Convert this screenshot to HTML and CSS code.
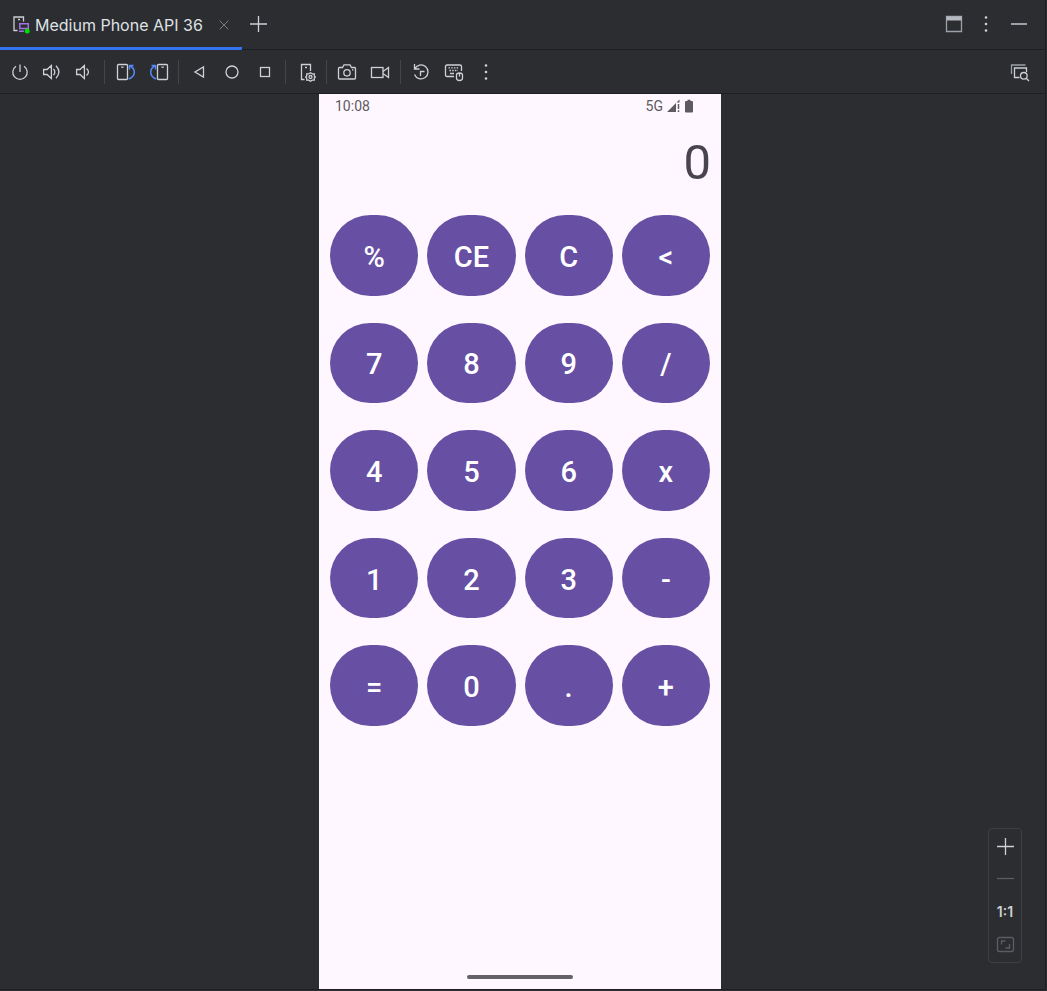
FILE: index.html
```html
<!DOCTYPE html>
<html lang="en">
<head>
<meta charset="utf-8">
<meta name="viewport" content="width=device-width, initial-scale=1">
<title>Medium Phone API 36</title>
<link rel="stylesheet" href="styles.css">
</head>
<body>
<div class="window">
  <header class="tabs">
    <div class="tab">
      <svg class="tab-icon" width="20" height="20" viewBox="0 0 20 20">
        <path d="M5.500 15.500H2V2H11.500V6.500" class="line"/><path d="M6 4.500h2" class="line"/>
        <path d="M7.800 8.800h8.500v4.700H7.800z" class="violet"/><path d="M7 16.200h5" class="violet"/>
        <circle cx="15.200" cy="16" r="2.500" fill="#00e000"/>
      </svg>
      <span class="tab-title">Medium Phone API 36</span>
      <button class="close" aria-label="Close tab"><svg width="10" height="10" viewBox="0 0 10 10"><path d="M.5.5l9 9M9.500.5l-9 9"/></svg></button>
    </div>
    <button class="icon" aria-label="New tab"><svg width="24" height="24" viewBox="0 0 24 24"><path d="M12.500 3v16M4 11h17"/></svg></button>
    <div class="window-actions">
      <button class="icon" aria-label="Window"><svg width="24" height="24" viewBox="0 0 24 24"><path d="M4.500 4.500h15v15h-15z" class="muted"/><path d="M4.500 4.500h15v4h-15z" fill="#b4b8bf" stroke="none"/></svg></button>
      <button class="icon" aria-label="Options"><svg width="24" height="24" viewBox="0 0 24 24"><g class="dots"><circle cx="12" cy="5.500" r="1.300"/><circle cx="12" cy="12" r="1.300"/><circle cx="12" cy="18.500" r="1.300"/></g></svg></button>
      <button class="icon" aria-label="Hide"><svg width="24" height="24" viewBox="0 0 24 24"><path d="M5 12h16" class="muted" stroke-width="2"/></svg></button>
    </div>
  </header>

  <div class="toolbar" role="toolbar" aria-label="Emulator controls">
    <div class="group">
      <button class="icon" aria-label="Power"><svg width="24" height="24" viewBox="0 0 24 24"><path d="M12 4.500v7.500M8 6.200A7.200 7.200 0 1 0 16 6.200"/></svg></button>
      <button class="icon" aria-label="Volume up"><svg width="24" height="24" viewBox="0 0 24 24"><path d="M3.600 9.500H7l4.400-4v13L7 14.500H3.600zM13.500 8.800q2.600 3.200 0 6.400M16 5.800q5.800 6.200 0 12.400"/></svg></button>
      <button class="icon" aria-label="Volume down"><svg width="24" height="24" viewBox="0 0 24 24"><path d="M4.600 9.500H8l4.400-4v13L8 14.500H4.600zM14.500 8.500q4 3.500 0 7"/></svg></button>
    </div>
    <span class="separator"></span>
    <div class="group wide">
      <button class="icon" aria-label="Rotate left"><svg width="24" height="24" viewBox="0 0 24 24"><rect x="4.500" y="4.500" width="10" height="15" rx="1"/><path d="M8.200 7.200h2.300"/><path class="blue" d="M20.500 5.500H16.500V9.500M16.500 5.500q5 2.500 4.800 7t-5.600 6.500"/></svg></button>
      <button class="icon" aria-label="Rotate right"><svg width="24" height="24" viewBox="0 0 24 24"><rect x="11.500" y="4.500" width="10" height="15" rx="1"/><path d="M15.500 7.200h2.300"/><path class="blue" d="M5.500 5.500H9.500V9.500M9.500 5.500q-5 2.500-4.800 7t5.600 6.500"/></svg></button>
    </div>
    <span class="separator"></span>
    <div class="group wide">
      <button class="icon" aria-label="Back"><svg width="24" height="24" viewBox="0 0 24 24"><path d="M16.500 7v10L8 12z"/></svg></button>
      <button class="icon" aria-label="Home"><svg width="24" height="24" viewBox="0 0 24 24"><circle cx="12" cy="12" r="6"/></svg></button>
      <button class="icon" aria-label="Overview"><svg width="24" height="24" viewBox="0 0 24 24"><rect x="7.500" y="7.500" width="9" height="9"/></svg></button>
    </div>
    <span class="separator"></span>
    <div class="group">
      <button class="icon" aria-label="Device settings"><svg width="24" height="24" viewBox="0 0 24 24"><path d="M10.500 19.500H7.500v-15h9V11M11 7.500h2"/><path d="M16.500 12.700l1.800 1.100 2 .1v2.100l1 1-1 1v2.100l-2 .1-1.800 1.100-1.800-1.100-2-.1V18l-1-1 1-1v-2.100l2-.1z"/><circle cx="16.500" cy="17" r="1.500"/></svg></button>
    </div>
    <span class="separator"></span>
    <div class="group wide">
      <button class="icon" aria-label="Take screenshot"><svg width="24" height="24" viewBox="0 0 24 24"><path d="M4.500 7.500H7.500L9 4.800h6l1.500 2.700H19.500q1 0 1 1v9.500q0 1-1 1H4.500q-1 0-1-1V8.500q0-1 1-1z"/><circle cx="12" cy="12.800" r="3.200"/><path d="M17 9.800h1.500"/></svg></button>
      <button class="icon" aria-label="Record screen"><svg width="24" height="24" viewBox="0 0 24 24"><rect x="3.500" y="7.500" width="11.500" height="10"/><path d="M15 11.500l5.500-4v10l-5.500-4"/></svg></button>
    </div>
    <span class="separator"></span>
    <div class="group">
      <button class="icon" aria-label="Snapshots"><svg width="24" height="24" viewBox="0 0 24 24"><path d="M5.500 4v5h5M5.700 8.800A7 7 0 1 1 5.500 14.500M11.500 16v-4.500H15.500"/></svg></button>
      <button class="icon" aria-label="Hardware input"><svg width="24" height="24" viewBox="0 0 24 24"><path d="M13 16.500H6q-1.500 0-1.500-1.500V6.500Q4.500 5 6 5h13q1.500 0 1.500 1.500V11M9 13.500h4"/><path d="M7.500 7.800h10.500M8.500 10.500h8.500" stroke-dasharray="1.500 1.200"/><path d="M15.500 15q0-2 3-2t3 2v3q0 2.500-3 2.500t-3-2.500zM18.500 13v3.500"/></svg></button>
      <button class="icon" aria-label="More"><svg width="24" height="24" viewBox="0 0 24 24"><g class="dots"><circle cx="13" cy="5.500" r="1.300"/><circle cx="13" cy="12" r="1.300"/><circle cx="13" cy="18.500" r="1.300"/></g></svg></button>
    </div>
    <button class="icon inspect" aria-label="Inspect layout"><svg width="24" height="24" viewBox="0 0 24 24"><path d="M3.500 14V5h14" class="muted"/><path d="M11.500 17.500H6.500V8h12v4"/><circle cx="15.800" cy="15.800" r="3.300"/><path d="M18.200 18.200L21 21"/></svg></button>
  </div>

  <main class="stage">
    <section class="phone" aria-label="Calculator">
      <div class="status">
        <span>10:08</span>
        <span class="signals">
          <span>5G</span>
          <svg width="14" height="14" viewBox="0 0 14 14"><path d="M0 13L9 4v9zM9.500 3.500L12.500.5v3z" fill="#5e5b60"/><path d="M11.500 5v5M11.500 11.200v1.800" stroke="#5e5b60" stroke-width="1.500"/></svg>
          <svg width="8" height="14" viewBox="0 0 8 14"><path d="M2.500.8h3V2H7q1 0 1 1v9.500q0 1-1 1H1q-1 0-1-1V3q0-1 1-1h1.500z" fill="#5e5b60"/></svg>
        </span>
      </div>
      <output class="display">0</output>
      <div class="keypad">
        <button>%</button><button>CE</button><button>C</button><button>&lt;</button>
        <button>7</button><button>8</button><button>9</button><button>/</button>
        <button>4</button><button>5</button><button>6</button><button>x</button>
        <button>1</button><button>2</button><button>3</button><button>-</button>
        <button>=</button><button>0</button><button>.</button><button>+</button>
      </div>
      <div class="gesture"></div>
    </section>
    <div class="zoom">
      <button class="icon" aria-label="Zoom in"><svg width="24" height="24" viewBox="0 0 24 24"><path d="M12.500 4v17M4 12.500h17"/></svg></button>
      <button class="icon dim" aria-label="Zoom out"><svg width="24" height="24" viewBox="0 0 24 24"><path d="M4 11.500h17"/></svg></button>
      <button class="actual">1:1</button>
      <button class="icon dim" aria-label="Fit to window"><svg width="24" height="24" viewBox="0 0 24 24"><rect x="4.500" y="4.500" width="16" height="14" rx="2"/><path d="M8.500 11.500v-3.500h4M16.500 11v4h-4"/></svg></button>
    </div>
  </main>
</div>
</body>
</html>
```
FILE: styles.css
```css
* { box-sizing: border-box; }

body {
  margin: 0;
  padding: 0 1px 1px 0;
  height: 100vh;
  background: #2b2d30;
  color: #dfe1e5;
  font-family: Inter, "Liberation Sans", sans-serif;
}

button {
  margin: 0;
  padding: 0;
  border: 0;
  background: none;
  color: inherit;
  font: inherit;
}

svg { display: block; fill: none; flex: none; }

.window {
  display: flex;
  flex-direction: column;
  height: 100%;
  border-right: 1px solid #1e1f22;
  border-bottom: 1px solid #1e1f22;
}

.icon { width: 24px; height: 24px; stroke: #ced0d6; stroke-width: 1.3; }
.icon .muted { stroke: #9da0a8; }
.icon .blue { stroke: #548af7; stroke-width: 1.5; }
.icon .dots { fill: #ced0d6; stroke: none; }
.icon.dim { stroke: #5a5d63; }

.tabs {
  display: flex;
  align-items: center;
  flex: none;
  height: 50px;
  border-bottom: 1px solid #1e1f22;
}

.tab {
  display: flex;
  align-items: center;
  height: 50px;
  margin: 0 4px -1px 0;
  padding: 3px 13px 0 12px;
  border-bottom: 3px solid #3574f0;
  border-bottom-right-radius: 1px;
}

.tab-icon { margin-right: 3px; }
.tab-icon .line { stroke: #ced0d6; stroke-width: 1.3; }
.tab-icon .violet { stroke: #a571e6; stroke-width: 1.5; }
.tab-title { font-size: 16px; line-height: 24px; white-space: nowrap; }
.close { margin-left: 16px; stroke: #7a7d84; }

.window-actions { display: flex; gap: 8px; margin-left: auto; padding: 0 15px 2px 0; }

.toolbar {
  display: flex;
  align-items: center;
  flex: none;
  gap: 8px;
  padding: 10px 13px 9px 8px;
  border-bottom: 1px solid #1e1f22;
}

.group { display: flex; gap: 8px; }
.group.wide { gap: 9px; }
.separator { width: 1px; height: 24px; background: #43454a; }
.inspect { margin-left: auto; }

.stage {
  position: relative;
  display: flex;
  justify-content: center;
  flex: 1;
  min-height: 0;
  padding-right: 5px;
}

.phone {
  display: flex;
  flex-direction: column;
  width: 402px;
  max-width: 100%;
  background: #fef7ff;
  font-family: Roboto, "Liberation Sans", sans-serif;
}

.status {
  display: flex;
  align-items: center;
  justify-content: space-between;
  height: 24px;
  padding: 0 28px 0 16px;
  color: #5e5b60;
  font-size: 14px;
  line-height: 24px;
}

.signals { display: flex; align-items: center; gap: 4px; }

.display {
  padding: 15px 10px 22px;
  color: #49454f;
  font-size: 49px;
  line-height: 60px;
  text-align: right;
}

.keypad {
  display: grid;
  grid-template-columns: repeat(4, 1fr);
  grid-template-rows: repeat(5, 1fr);
  gap: 27px 9px;
  height: 511px;
  padding: 0 11px;
}

.keypad button {
  padding-top: 3px;
  border-radius: 44px;
  background: #6750a3;
  color: #fff;
  font-size: 29px;
  font-weight: 500;
}

.gesture {
  width: 106px;
  height: 4px;
  margin: auto auto 10px;
  border-radius: 2px;
  background: #656168;
}

.zoom {
  position: absolute;
  right: 23px;
  bottom: 26px;
  display: flex;
  flex-direction: column;
  align-items: center;
  gap: 9px;
  width: 34px;
  padding: 5px 0;
  border: 1px solid #3e4044;
  border-radius: 4px;
}

.actual { height: 24px; font-size: 14px; font-weight: 600; line-height: 24px; color: #ced0d6; }
```
